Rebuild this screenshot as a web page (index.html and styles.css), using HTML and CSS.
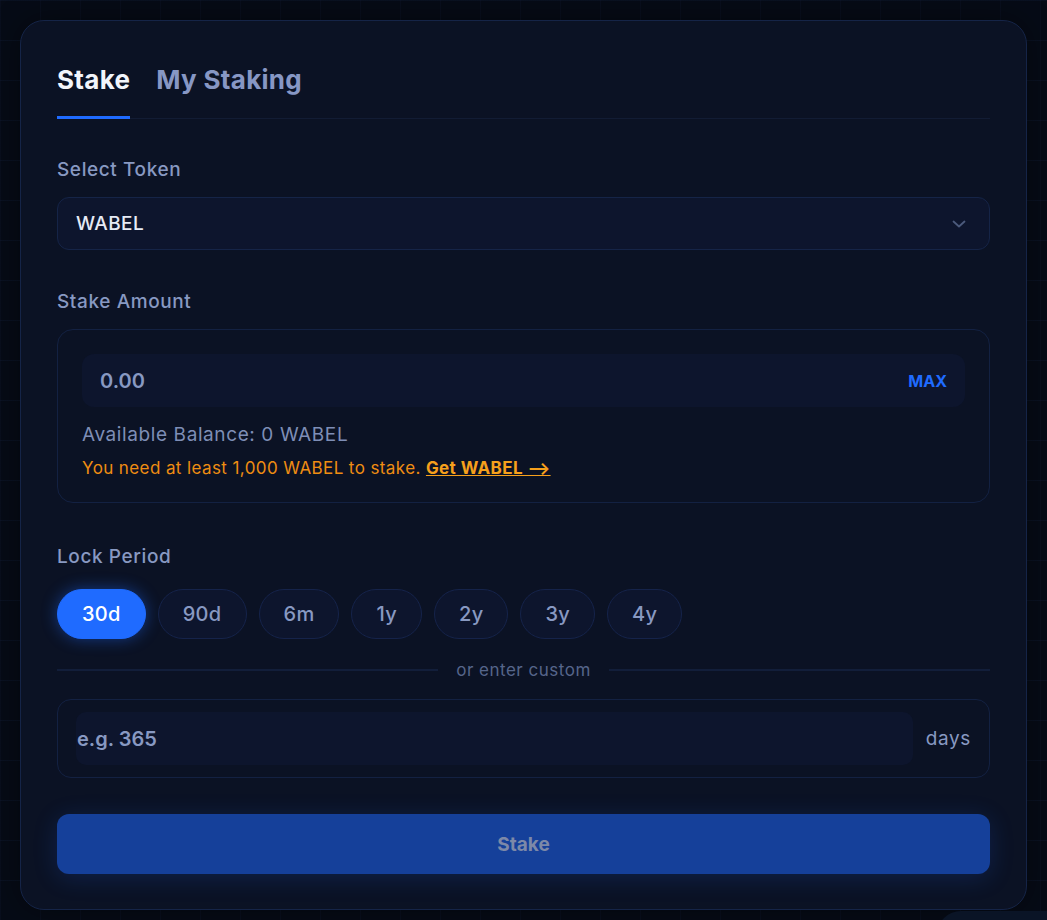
FILE: index.html
```html
<!DOCTYPE html>
<html lang="en">
<head>
  <meta charset="UTF-8">
  <title>Stake WABEL</title>
  <link rel="stylesheet" href="styles.css">
</head>
<body>
  <div class="stake-card">
    <div class="tabs">
      <button class="tab active">Stake</button>
      <button class="tab">My Staking</button>
    </div>

    <label class="field-label">Select Token</label>
    <div class="select">
      <span>WABEL</span>
      <svg class="chevron" width="16" height="16" viewBox="0 0 16 16" fill="none">
        <path d="M2.5 5.5 L8 10.5 L13.5 5.5" stroke="#4b5a7c" stroke-width="1.8" stroke-linecap="round" stroke-linejoin="round"/>
      </svg>
    </div>

    <label class="field-label">Stake Amount</label>
    <div class="amount-box">
      <div class="amount-input">
        <span class="amount-value">0.00</span>
        <button class="max-btn">MAX</button>
      </div>
      <div class="balance">Available Balance: 0 WABEL</div>
      <div class="warning">You need at least 1,000 WABEL to stake. <a href="#">Get WABEL ⟶</a></div>
    </div>

    <label class="field-label lock-label">Lock Period</label>
    <div class="periods">
      <button class="period active">30d</button>
      <button class="period">90d</button>
      <button class="period">6m</button>
      <button class="period">1y</button>
      <button class="period">2y</button>
      <button class="period">3y</button>
      <button class="period">4y</button>
    </div>

    <div class="or-divider"><span>or enter custom</span></div>

    <div class="custom-box">
      <input type="text" class="custom-input" placeholder="e.g. 365">
      <span class="days">days</span>
    </div>

    <button class="stake-btn">Stake</button>
  </div>
  <div class="next-card"></div>
</body>
</html>
```

FILE: styles.css
```css
:root {
  --page-bg: #060b16;
  --card-bg: #0b1224;
  --field-bg: #0d152d;
  --border: #152447;
  --label: #8899c2;
  --muted: #56658a;
  --accent: #1f6bff;
  --orange: #ef8d12;
}

* {
  box-sizing: border-box;
}

body {
  margin: 0;
  padding: 20px 20px 0;
  height: 920px;
  overflow: hidden;
  background-color: var(--page-bg);
  background-image:
    linear-gradient(rgba(40, 62, 120, 0.12) 1px, transparent 1px),
    linear-gradient(90deg, rgba(40, 62, 120, 0.08) 1px, transparent 1px);
  background-size: 40px 40px;
  font-family: Inter, "Noto Sans", sans-serif;
  color: var(--label);
}

.stake-card {
  width: 1007px;
  height: 890px;
  padding: 43px 36px 0;
  background: var(--card-bg);
  border: 1px solid var(--border);
  border-radius: 24px;
  box-shadow: 0 0 30px rgba(0, 0, 0, 0.4);
}

.tabs {
  display: flex;
  gap: 26px;
  border-bottom: 1px solid #121c34;
  margin-bottom: 39px;
}

.tab {
  background: none;
  border: none;
  padding: 0 0 20px;
  margin-bottom: -1px;
  border-bottom: 3px solid transparent;
  font-family: inherit;
  font-size: 26px;
  line-height: 32px;
  font-weight: 700;
  color: #8797c4;
  letter-spacing: 0.3px;
}

.tab.active {
  color: #f2f5fb;
  border-bottom-color: var(--accent);
}

.field-label {
  display: block;
  font-size: 19px;
  line-height: 24px;
  font-weight: 500;
  letter-spacing: 0.6px;
  color: var(--label);
  margin-bottom: 15px;
}

.select {
  display: flex;
  align-items: center;
  justify-content: space-between;
  height: 53px;
  padding: 0 22px 0 18px;
  background: var(--field-bg);
  border: 1px solid var(--border);
  border-radius: 12px;
  font-size: 19px;
  font-weight: 500;
  letter-spacing: 0.4px;
  color: #e6ebf5;
  margin-bottom: 40px;
}

.amount-box {
  padding: 24px 24px 23px;
  border: 1px solid #132142;
  border-radius: 16px;
  margin-bottom: 42px;
}

.amount-input {
  display: flex;
  align-items: center;
  justify-content: space-between;
  height: 53px;
  padding: 0 18px;
  background: var(--field-bg);
  border-radius: 12px;
  margin-bottom: 16px;
}

.amount-value {
  font-size: 20px;
  font-weight: 600;
  color: var(--label);
}

.max-btn {
  background: none;
  border: none;
  padding: 0;
  font-family: inherit;
  font-size: 16px;
  font-weight: 700;
  color: var(--accent);
}

.balance {
  font-size: 19px;
  line-height: 24px;
  letter-spacing: 0.6px;
  color: #7e8eb6;
  margin-bottom: 10px;
}

.warning {
  font-size: 17px;
  line-height: 22px;
  letter-spacing: 0.4px;
  color: var(--orange);
}

.warning a {
  color: #f6a01c;
  font-weight: 700;
}

.lock-label {
  margin-bottom: 20px;
}

.periods {
  display: flex;
  gap: 12px;
  margin-bottom: 21px;
}

.period {
  height: 50px;
  padding: 0 24px;
  background: var(--field-bg);
  border: 1px solid #15234a;
  border-radius: 25px;
  font-family: inherit;
  font-size: 20px;
  font-weight: 500;
  letter-spacing: 0.3px;
  color: var(--label);
}

.period.active {
  background: var(--accent);
  border-color: var(--accent);
  color: #ffffff;
  box-shadow: 0 0 16px rgba(31, 107, 255, 0.45);
}

.or-divider {
  display: flex;
  align-items: center;
  gap: 18px;
  font-size: 17px;
  line-height: 20px;
  letter-spacing: 0.5px;
  color: var(--muted);
  margin-bottom: 19px;
}

.or-divider::before,
.or-divider::after {
  content: "";
  flex: 1;
  height: 2px;
  background: #121e3a;
}

.custom-box {
  display: flex;
  align-items: center;
  gap: 13px;
  height: 79px;
  padding: 0 18px;
  border: 1px solid #132142;
  border-radius: 14px;
  margin-bottom: 36px;
}

.custom-input {
  flex: 1;
  height: 53px;
  padding: 0 1px;
  background: var(--field-bg);
  border: none;
  border-radius: 10px;
  font-family: inherit;
  font-size: 20px;
  font-weight: 600;
  color: var(--label);
  outline: none;
}

.custom-input::placeholder {
  color: var(--label);
}

.days {
  font-size: 19px;
  letter-spacing: 0.6px;
  color: var(--label);
}

.stake-btn {
  display: block;
  width: 100%;
  height: 60px;
  background: #15409a;
  border: none;
  border-radius: 12px;
  font-family: inherit;
  font-size: 19px;
  font-weight: 700;
  color: #7d89a8;
  box-shadow: 0 4px 24px rgba(31, 107, 255, 0.18);
}

.next-card {
  height: 40px;
  margin: 1px -20px 0 917px;
  background: #0a1426;
  border-radius: 24px 0 0 0;
}
```
